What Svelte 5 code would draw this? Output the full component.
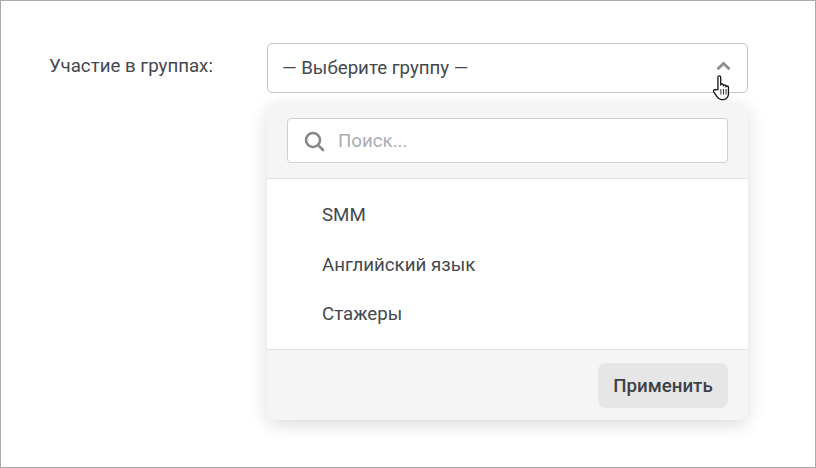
<script lang="ts">
  const groups = ['SMM', 'Английский язык', 'Стажеры'];
</script>

<div class="page">
  <div class="label">Участие в группах:</div>
  <div class="field">
    <div class="select">
      <span>— Выберите группу —</span>
      <svg class="chev" width="15" height="10" viewBox="0 0 15 10">
        <path d="M1.500 8.300 7.500 2.500l6 5.800" fill="none" stroke="#8b8f94" stroke-width="2.800" />
      </svg>
      <svg class="cursor" width="20" height="28" viewBox="0 0 18 26">
        <path
          d="M5.200 14.600V3c0-1.600 2.600-1.600 2.600 0v7.200c0-1.300 2.400-1.300 2.400 0v.9c0-1.300 2.400-1.300 2.400 0v.9c0-1.200 2.400-1.200 2.400.2v6.300c0 2.400-1.700 5.200-4.600 5.200H8.400c-2 0-2.900-1-3.900-2.500L1.300 16.500c-.8-1.300.8-2.700 2-1.700z"
          fill="#fff"
          stroke="#111"
          stroke-width="1.200"
          stroke-linejoin="round"
        />
        <path d="M8 14v5M10.400 14v5M12.800 14v5" stroke="#111" stroke-width=".8" fill="none" />
      </svg>
    </div>
    <div class="menu">
      <div class="head">
        <div class="search">
          <svg width="22" height="22" viewBox="0 0 22 22">
            <circle cx="10" cy="10" r="7" fill="none" stroke="#85898d" stroke-width="2.600" />
            <path d="m15 15 5 5" stroke="#85898d" stroke-width="2.600" stroke-linecap="round" />
          </svg>
          <span>Поиск...</span>
        </div>
      </div>
      <ul>
        {#each groups as g}
          <li>{g}</li>
        {/each}
      </ul>
      <div class="foot">
        <button>Применить</button>
      </div>
    </div>
  </div>
</div>

<style>
  :global(body) {
    margin: 0;
    background: #fff;
  }
  .page {
    box-sizing: border-box;
    width: 816px;
    height: 468px;
    border: 1px solid #a9a9a9;
    padding: 42px 67px 0 48px;
    display: flex;
    font-family: Roboto, sans-serif;
    font-size: 18.700px;
    color: #44494e;
  }
  .label {
    width: 218px;
    line-height: 46px;
  }
  .field {
    width: 481px;
  }
  .select {
    position: relative;
    box-sizing: border-box;
    height: 50px;
    border: 1px solid #c4c4c4;
    border-radius: 5px;
    padding: 0 16px 0 14px;
    display: flex;
    align-items: center;
    justify-content: space-between;
  }
  .select span {
    margin-top: -1px;
  }
  .chev {
    margin-top: -4px;
  }
  .cursor {
    position: absolute;
    left: 444px;
    top: 30px;
  }
  .menu {
    margin-top: 10px;
    height: 317px;
    display: flex;
    flex-direction: column;
    border-radius: 10px;
    overflow: hidden;
    background: #fff;
    box-shadow: 0 5px 18px rgba(0, 0, 0, 0.14);
  }
  .head {
    box-sizing: border-box;
    height: 76px;
    padding: 15px 20px 0;
    background: #f5f5f5;
    border-bottom: 1px solid #e1e1e1;
  }
  .search {
    box-sizing: border-box;
    height: 45px;
    display: flex;
    align-items: center;
    gap: 13px;
    padding: 0 15px;
    background: #fff;
    border: 1px solid #cfcfcf;
    border-radius: 4px;
    color: #a9aeb3;
  }
  ul {
    flex: 1;
    list-style: none;
    margin: 0;
    padding: 12px 0 0 55px;
  }
  li {
    height: 49.500px;
    line-height: 49.500px;
  }
  .foot {
    box-sizing: border-box;
    height: 71px;
    padding: 13px 20px 0;
    display: flex;
    justify-content: flex-end;
    background: #f5f5f5;
    border-top: 1px solid #e1e1e1;
  }
  button {
    width: 130px;
    height: 45px;
    border: 0;
    border-radius: 8px;
    background: #e6e6e6;
    color: #3e4145;
    font: 500 18.700px Roboto, sans-serif;
  }
</style>
